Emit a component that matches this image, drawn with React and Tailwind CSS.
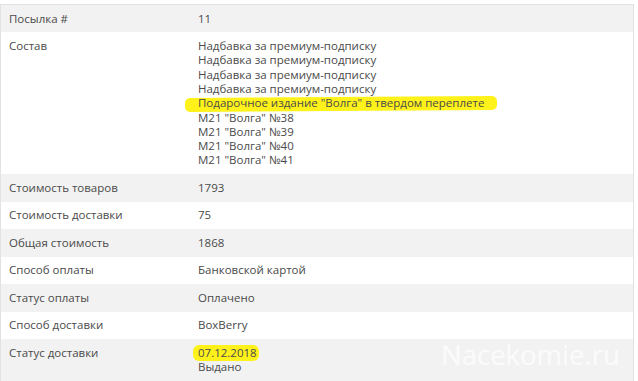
export default function App() {
  const items = [
    { text: "Надбавка за премиум-подписку" },
    { text: "Надбавка за премиум-подписку" },
    { text: "Надбавка за премиум-подписку" },
    { text: "Надбавка за премиум-подписку" },
    { text: 'Подарочное издание "Волга" в твердом переплете', marked: true },
    { text: 'М21 "Волга" №38' },
    { text: 'М21 "Волга" №39' },
    { text: 'М21 "Волга" №40' },
    { text: 'М21 "Волга" №41' },
  ];

  const rows = [
    { label: "Посылка #", value: ["11"] },
    { label: "Состав", list: items },
    { label: "Стоимость товаров", value: ["1793"] },
    { label: "Стоимость доставки", value: ["75"] },
    { label: "Общая стоимость", value: ["1868"] },
    { label: "Способ оплаты", value: ["Банковской картой"] },
    { label: "Статус оплаты", value: ["Оплачено"] },
    { label: "Способ доставки", value: ["BoxBerry"] },
    { label: "Статус доставки", date: "07.12.2018", value: ["Выдано"] },
  ];

  return (
    <div
      className="relative w-[638px] h-[381px] overflow-hidden bg-white pt-[4px] pr-[4px] text-[11.5px] leading-[14.3px] text-[#4a4a4a]"
      style={{ fontFamily: '"Open Sans", "Noto Sans", Arial, sans-serif' }}
    >
      <div className="border-t border-l border-r border-[#e2e2e2]">
        {rows.map((row, i) => (
          <div
            key={i}
            className={`flex ${i % 2 === 0 ? "bg-[#f2f2f2]" : "bg-white"}`}
          >
            <div className="w-[189px] shrink-0 pl-[8px] py-[6.6px]">{row.label}</div>
            <div className="flex-1 pl-[8px] py-[6.6px]">
              {row.list &&
                row.list.map((it, j) =>
                  it.marked ? (
                    <div key={j}>
                      <span className="relative inline-block">
                        <span className="absolute -left-[13px] -right-[13px] top-[1px] bottom-[-1px] rounded-[5px] bg-[#fff21a] -rotate-[0.4deg]" />
                        <span className="relative">{it.text}</span>
                      </span>
                    </div>
                  ) : (
                    <div key={j}>{it.text}</div>
                  )
                )}
              {row.date && (
                <div>
                  <span className="relative inline-block">
                    <span className="absolute -left-[5px] -right-[2px] top-[-1px] bottom-[-1px] rounded-[6px] bg-[#fff21a]" />
                    <span className="relative">{row.date}</span>
                  </span>
                </div>
              )}
              {row.value && row.value.map((v, j) => <div key={j}>{v}</div>)}
            </div>
          </div>
        ))}
      </div>
      <div className="absolute left-[441px] top-[337px] text-[27.5px] leading-[36px] text-white/75 select-none">
        Nacekomie.ru
      </div>
    </div>
  );
}
